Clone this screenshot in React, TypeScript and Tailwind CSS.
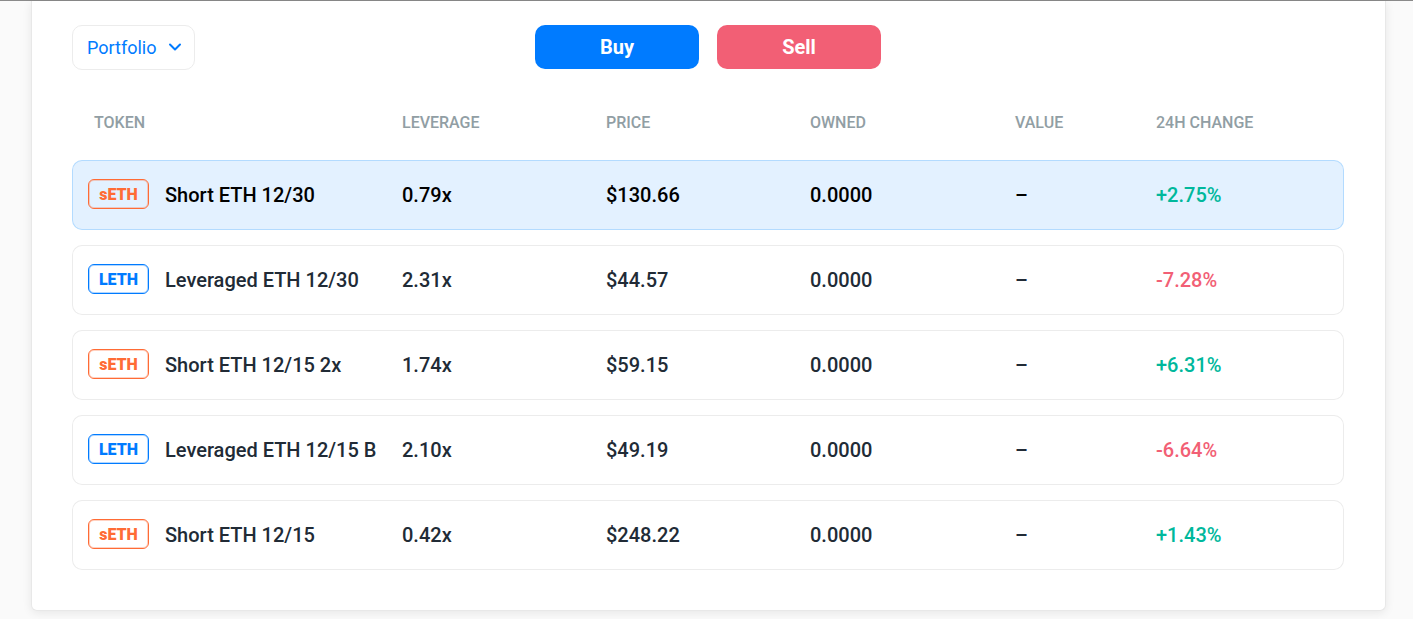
import React from 'react';
import clsx from 'clsx';
import { ChevronDown } from 'lucide-react';

interface Token {
  symbol: 'sETH' | 'LETH';
  name: string;
  leverage: string;
  price: string;
  owned: string;
  value: string;
  change: string;
}

const tokens: Token[] = [
  { symbol: 'sETH', name: 'Short ETH 12/30', leverage: '0.79x', price: '$130.66', owned: '0.0000', value: '–', change: '+2.75%' },
  { symbol: 'LETH', name: 'Leveraged ETH 12/30', leverage: '2.31x', price: '$44.57', owned: '0.0000', value: '–', change: '-7.28%' },
  { symbol: 'sETH', name: 'Short ETH 12/15 2x', leverage: '1.74x', price: '$59.15', owned: '0.0000', value: '–', change: '+6.31%' },
  { symbol: 'LETH', name: 'Leveraged ETH 12/15 B', leverage: '2.10x', price: '$49.19', owned: '0.0000', value: '–', change: '-6.64%' },
  { symbol: 'sETH', name: 'Short ETH 12/15', leverage: '0.42x', price: '$248.22', owned: '0.0000', value: '–', change: '+1.43%' },
];

const TokenBadge: React.FC<{ symbol: Token['symbol'] }> = ({ symbol }) => (
  <span
    className={clsx(
      'mb-0.5 flex h-[30px] w-[61px] shrink-0 items-center justify-center rounded-md border pt-0.5 font-black text-base ring-1 ring-inset',
      symbol === 'sETH'
        ? 'border-[#ff6b35] text-[#ff6b35] ring-[#ff6b35]/30'
        : 'border-[#007bff] text-[#007bff] ring-[#007bff]/30'
    )}
  >
    {symbol}
  </span>
);

const TokenRow: React.FC<{ token: Token; selected: boolean }> = ({ token, selected }) => {
  const cell = clsx(
    'h-[70px] border-y pl-4',
    selected ? 'border-[#b3dbff] bg-[#e3f1ff]' : 'border-[#ececec]'
  );

  return (
    <tr className={selected ? 'text-black' : 'text-[#212b36]'}>
      <td className={clsx(cell, 'rounded-l-[10px] border-l pl-[15px]')}>
        <div className="flex items-center gap-4 whitespace-nowrap">
          <TokenBadge symbol={token.symbol} />
          {token.name}
        </div>
      </td>
      <td className={cell}>{token.leverage}</td>
      <td className={cell}>{token.price}</td>
      <td className={cell}>{token.owned}</td>
      <td className={cell}>{token.value}</td>
      <td
        className={clsx(
          cell,
          'rounded-r-[10px] border-r',
          token.change.startsWith('+') ? 'text-[#00b89c]' : 'text-[#f25f75]'
        )}
      >
        {token.change}
      </td>
    </tr>
  );
};

const App: React.FC = () => {
  return (
    <div className="min-h-screen border-t border-[#8a8a8a] bg-[#fafafa] pb-2 pl-[31px] pr-[27px] font-['Roboto',sans-serif]">
      <main className="rounded-b-md border border-t-0 border-[#e8e8e8] bg-white pb-[25px] pl-10 pr-[41px] pt-6 shadow-[0_2px_10px_rgba(0,0,0,0.08)]">
        {/* Toolbar */}
        <div className="grid grid-cols-[1fr_auto_1fr] items-start">
          <div className="relative w-[123px]">
            <select
              aria-label="View"
              className="h-[45px] w-full appearance-none rounded-[10px] border border-[#ececec] bg-white pl-[14px] text-lg text-[#007bff]"
            >
              <option>Portfolio</option>
            </select>
            <ChevronDown
              size={20}
              strokeWidth={2.4}
              className="pointer-events-none absolute right-[10px] top-3 text-[#007bff]"
            />
          </div>
          <div className="flex gap-[18px] text-xl font-bold text-white">
            <button className="h-11 w-[164px] rounded-[10px] bg-[#007bff]">Buy</button>
            <button className="h-11 w-[164px] rounded-[10px] bg-[#f25f75]">Sell</button>
          </div>
        </div>

        {/* Tokens */}
        <table className="mt-[14px] w-full table-fixed border-separate border-spacing-x-0 border-spacing-y-[15px] text-left text-xl font-medium">
          <thead>
            <tr className="text-base text-[#919ea4]">
              <th className="h-[46px] w-[314px] pl-[22px] pt-0.5 font-medium">TOKEN</th>
              <th className="w-[204px] pl-4 pt-0.5 font-medium">LEVERAGE</th>
              <th className="w-[204px] pl-4 pt-0.5 font-medium">PRICE</th>
              <th className="w-[205px] pl-4 pt-0.5 font-medium">OWNED</th>
              <th className="w-[141px] pl-4 pt-0.5 font-medium">VALUE</th>
              <th className="pl-4 pt-0.5 font-medium">24H CHANGE</th>
            </tr>
          </thead>
          <tbody>
            {tokens.map((token, index) => (
              <TokenRow key={token.name} token={token} selected={index === 0} />
            ))}
          </tbody>
        </table>
      </main>
    </div>
  );
};

export default App;
